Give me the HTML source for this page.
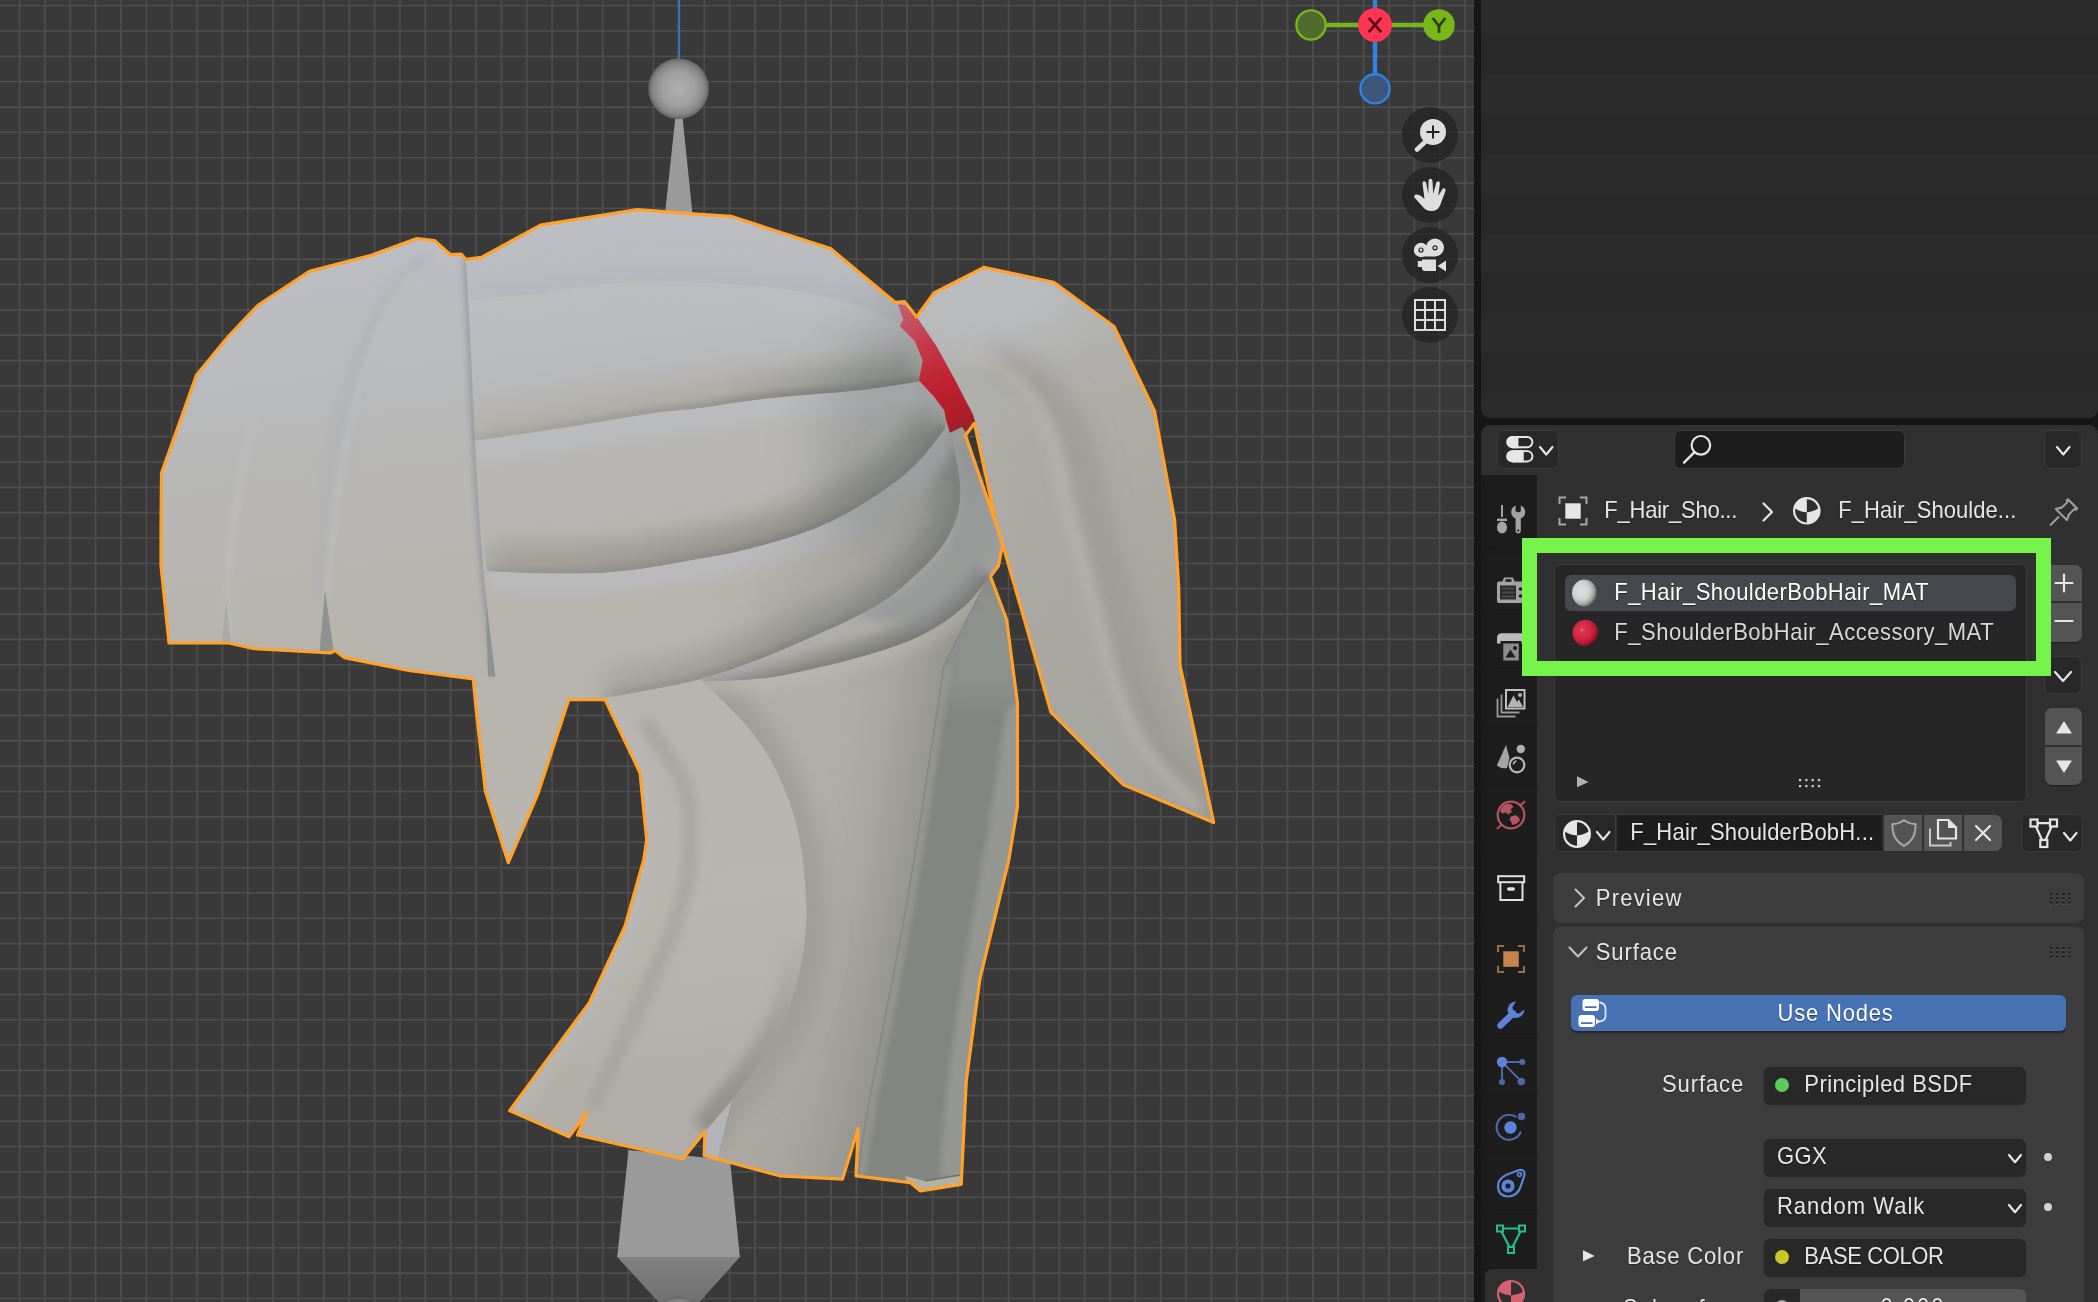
<!DOCTYPE html>
<html><head><meta charset="utf-8"><title>Blender</title>
<style>
html,body{margin:0;padding:0}
body{width:2098px;height:1302px;background:#161616;overflow:hidden;position:relative;font-family:"Liberation Sans",sans-serif;font-size:22px;color:#e6e6e6}
.abs{position:absolute}
.t{position:absolute;white-space:pre;line-height:26px;height:26px;opacity:.999;transform:scaleY(1.045);transform-origin:0 20.6px;text-shadow:0 1px 1px rgba(0,0,0,.45)}
#vp{position:absolute;left:0;top:0;width:1474px;height:1302px;background:#393939;overflow:hidden}
#vp svg{position:absolute;left:0;top:0}
#out{position:absolute;left:1481px;top:0;width:617px;height:418px;border-radius:0 0 9px 9px;overflow:hidden;background:#282828}
#props{position:absolute;left:1481px;top:425px;width:617px;height:877px;background:#303030;border-radius:9px 9px 0 0;overflow:hidden}
.btn{position:absolute;box-sizing:border-box}
</style></head><body>
<div id="vp"><svg width="1474" height="1302" viewBox="0 0 1474 1302"><path d="M19.54 0V1302M44.90 0V1302M70.26 0V1302M95.62 0V1302M120.98 0V1302M146.34 0V1302M171.70 0V1302M197.06 0V1302M222.42 0V1302M247.78 0V1302M273.14 0V1302M298.50 0V1302M323.86 0V1302M349.22 0V1302M374.58 0V1302M399.94 0V1302M425.30 0V1302M450.66 0V1302M476.02 0V1302M501.38 0V1302M526.74 0V1302M552.10 0V1302M577.46 0V1302M602.82 0V1302M628.18 0V1302M653.54 0V1302M678.90 0V1302M704.26 0V1302M729.62 0V1302M754.98 0V1302M780.34 0V1302M805.70 0V1302M831.06 0V1302M856.42 0V1302M881.78 0V1302M907.14 0V1302M932.50 0V1302M957.86 0V1302M983.22 0V1302M1008.58 0V1302M1033.94 0V1302M1059.30 0V1302M1084.66 0V1302M1110.02 0V1302M1135.38 0V1302M1160.74 0V1302M1186.10 0V1302M1211.46 0V1302M1236.82 0V1302M1262.18 0V1302M1287.54 0V1302M1312.90 0V1302M1338.26 0V1302M1363.62 0V1302M1388.98 0V1302M1414.34 0V1302M1439.70 0V1302M1465.06 0V1302M0 5.65H1474M0 31.00H1474M0 56.35H1474M0 81.70H1474M0 107.05H1474M0 132.40H1474M0 157.75H1474M0 183.10H1474M0 208.45H1474M0 233.80H1474M0 259.15H1474M0 284.50H1474M0 309.85H1474M0 335.20H1474M0 360.55H1474M0 385.90H1474M0 411.25H1474M0 436.60H1474M0 461.95H1474M0 487.30H1474M0 512.65H1474M0 538.00H1474M0 563.35H1474M0 588.70H1474M0 614.05H1474M0 639.40H1474M0 664.75H1474M0 690.10H1474M0 715.45H1474M0 740.80H1474M0 766.15H1474M0 791.50H1474M0 816.85H1474M0 842.20H1474M0 867.55H1474M0 892.90H1474M0 918.25H1474M0 943.60H1474M0 968.95H1474M0 994.30H1474M0 1019.65H1474M0 1045.00H1474M0 1070.35H1474M0 1095.70H1474M0 1121.05H1474M0 1146.40H1474M0 1171.75H1474M0 1197.10H1474M0 1222.45H1474M0 1247.80H1474M0 1273.15H1474M0 1298.50H1474" stroke="#4d4d4d" stroke-width="1.7" fill="none"/><defs>
<linearGradient id="gb" gradientUnits="userSpaceOnUse" x1="500" y1="210" x2="620" y2="1190">
<stop offset="0" stop-color="#bcbec3"/><stop offset=".1" stop-color="#babcc0"/><stop offset=".2" stop-color="#b8b8b8"/><stop offset=".3" stop-color="#b8b7b4"/><stop offset=".4" stop-color="#b7b4ad"/><stop offset=".72" stop-color="#b9b6af"/><stop offset="1" stop-color="#afaca5"/></linearGradient>
<linearGradient id="gp" gradientUnits="userSpaceOnUse" x1="930" y1="300" x2="1200" y2="800">
<stop offset="0" stop-color="#bbbcbf"/><stop offset=".3" stop-color="#adaca7"/><stop offset="1" stop-color="#a3a29d"/></linearGradient>
<linearGradient id="gr" gradientUnits="userSpaceOnUse" x1="905" y1="310" x2="962" y2="430">
<stop offset="0" stop-color="#c65a6e"/><stop offset=".3" stop-color="#c53a4b"/><stop offset=".6" stop-color="#bf2331"/><stop offset=".9" stop-color="#ae1d29"/><stop offset="1" stop-color="#962428"/></linearGradient>
<radialGradient id="gs" cx=".5" cy=".5" r=".5"><stop offset="0" stop-color="#afafaf"/><stop offset=".55" stop-color="#a0a0a0"/><stop offset=".85" stop-color="#868686"/><stop offset="1" stop-color="#646464"/></radialGradient>
<linearGradient id="gbone" x1="0" y1="0" x2="0" y2="1"><stop offset="0" stop-color="#828282"/><stop offset="1" stop-color="#707070"/></linearGradient>
<filter id="b3" filterUnits="userSpaceOnUse" x="0" y="0" width="1474" height="1302"><feGaussianBlur stdDeviation="3"/></filter>
<filter id="b6" filterUnits="userSpaceOnUse" x="0" y="0" width="1474" height="1302"><feGaussianBlur stdDeviation="6"/></filter>
<filter id="b12" filterUnits="userSpaceOnUse" x="0" y="0" width="1474" height="1302"><feGaussianBlur stdDeviation="12"/></filter>
<filter id="b25" filterUnits="userSpaceOnUse" x="0" y="0" width="1474" height="1302"><feGaussianBlur stdDeviation="25"/></filter>
<clipPath id="cb"><path d="M161.0 530.0 L161.5 473.0 L175.0 435.4 L196.5 375.0 L228.7 336.0 L258.3 305.0 L309.4 271.4 L371.2 255.3 L416.9 238.6 L434.4 240.5 L450.5 254.7 L461.2 254.0 L465.8 259.3 L481.4 257.4 L540.5 225.2 L637.3 209.6 L693.0 213.8 L731.0 216.3 L830.5 248.5 L895.0 302.3 L904.5 301.5 L916.6 317.0 L936.1 345.7 L954.5 379.1 L973.0 414.8 L975.3 422.3 L965.5 435.4 L997.0 526.8 L1002.6 544.2 L998.5 565.7 L990.5 576.5 L1006.6 619.5 L1017.4 702.8 L1017.4 807.6 L1008.8 860.0 L979.9 978.8 L966.3 1080.7 L961.2 1184.3 L920.5 1191.0 L910.3 1182.6 L856.0 1175.8 L858.3 1128.3 L842.4 1179.2 L779.6 1175.8 L704.2 1155.4 L704.9 1131.6 L682.8 1158.8 L577.5 1135.0 L586.7 1113.0 L569.0 1136.7 L509.6 1110.6 L589.4 1002.6 L625.0 926.2 L643.7 860.0 L646.7 840.0 L640.0 772.7 L605.0 699.6 L568.8 699.6 L537.8 794.2 L508.3 862.7 L485.4 791.5 L476.0 708.0 L473.3 679.0 L408.8 670.5 L344.3 657.6 L334.9 650.4 L330.9 653.0 L253.0 648.5 L228.7 643.0 L169.0 643.0 L161.0 565.7Z"/></clipPath><clipPath id="cp"><path d="M916.6 317.0 L934.0 293.0 L983.8 267.4 L1053.7 282.2 L1114.0 326.5 L1154.5 411.0 L1174.6 520.0 L1178.7 587.2 L1180.0 665.2 L1213.6 822.4 L1123.5 784.8 L1051.0 712.2 L1002.6 544.2 L997.0 526.8 L974.4 423.3 L973.0 414.8 L954.5 379.1 L936.1 345.7Z"/></clipPath></defs><path d="M678.9 0V60" stroke="#3b73b8" stroke-width="2.4"/><path d="M675.4 117 L682.5 117 L692.5 214 L665 214Z" fill="#9b9b9b"/><circle cx="678.6" cy="88.700" r="30.3" fill="url(#gs)"/><path d="M628.6 1150 L730 1160 L739.9 1256.9 L617.2 1256.9Z" fill="#9a9a9a"/><path d="M617.2 1256.9 L739.9 1256.9 L699.5 1302 L658.5 1302Z" fill="url(#gbone)"/><circle cx="678.6" cy="1327" r="30.4" fill="url(#gs)"/><path d="M161.0 530.0 L161.5 473.0 L175.0 435.4 L196.5 375.0 L228.7 336.0 L258.3 305.0 L309.4 271.4 L371.2 255.3 L416.9 238.6 L434.4 240.5 L450.5 254.7 L461.2 254.0 L465.8 259.3 L481.4 257.4 L540.5 225.2 L637.3 209.6 L693.0 213.8 L731.0 216.3 L830.5 248.5 L895.0 302.3 L904.5 301.5 L916.6 317.0 L936.1 345.7 L954.5 379.1 L973.0 414.8 L975.3 422.3 L965.5 435.4 L997.0 526.8 L1002.6 544.2 L998.5 565.7 L990.5 576.5 L1006.6 619.5 L1017.4 702.8 L1017.4 807.6 L1008.8 860.0 L979.9 978.8 L966.3 1080.7 L961.2 1184.3 L920.5 1191.0 L910.3 1182.6 L856.0 1175.8 L858.3 1128.3 L842.4 1179.2 L779.6 1175.8 L704.2 1155.4 L704.9 1131.6 L682.8 1158.8 L577.5 1135.0 L586.7 1113.0 L569.0 1136.7 L509.6 1110.6 L589.4 1002.6 L625.0 926.2 L643.7 860.0 L646.7 840.0 L640.0 772.7 L605.0 699.6 L568.8 699.6 L537.8 794.2 L508.3 862.7 L485.4 791.5 L476.0 708.0 L473.3 679.0 L408.8 670.5 L344.3 657.6 L334.9 650.4 L330.9 653.0 L253.0 648.5 L228.7 643.0 L169.0 643.0 L161.0 565.7Z" fill="url(#gb)"/><g clip-path="url(#cb)"><defs><clipPath id="s0"><path d="M462.0 190.0 L1000.0 190.0 L1000.0 330.0L901.9 326.0 L892.3 319.0 Q882.8 312.0 847.0 301.9 Q811.3 291.8 763.6 287.0 Q716.0 282.2 668.4 282.2 Q620.7 282.2 600.4 284.6 Q580.0 287.0 558.5 291.0 Q537.0 295.0 518.5 296.0 Q500.0 297.0 483.0 299.0 L466.0 301.0Z"/></clipPath><clipPath id="s1"><path d="M466.0 301.0 L483.0 299.0 Q500.0 297.0 518.5 296.0 Q537.0 295.0 558.5 291.0 Q580.0 287.0 600.4 284.6 Q620.7 282.2 668.4 282.2 Q716.0 282.2 763.6 287.0 Q811.3 291.8 847.0 301.9 Q882.8 312.0 892.3 319.0 L901.9 326.0 L1000.0 330.0 L1000.0 385.0L920.0 381.5 L890.0 386.2 Q860.0 391.0 812.5 394.4 Q764.9 397.9 732.5 403.2 Q700.0 408.6 678.3 410.5 Q656.6 412.3 602.5 421.4 Q548.3 430.4 510.0 435.8 L471.8 441.2Z"/></clipPath><clipPath id="s2"><path d="M471.8 441.2 L510.0 435.8 Q548.3 430.4 602.5 421.4 Q656.6 412.3 678.3 410.5 Q700.0 408.6 732.5 403.2 Q764.9 397.9 812.5 394.4 Q860.0 391.0 890.0 386.2 L920.0 381.5 L950.0 400.0L945.4 428.0 L931.0 447.0 Q916.7 466.0 895.9 481.8 Q875.0 497.5 846.2 513.8 Q817.5 530.0 778.2 541.0 Q739.0 552.0 715.9 556.0 Q692.7 560.0 671.4 564.0 Q650.0 568.0 631.0 570.3 Q612.0 572.6 598.2 573.0 Q584.4 573.5 562.2 573.5 Q540.0 573.5 513.5 572.4 L486.9 571.2Z"/></clipPath><clipPath id="s3"><path d="M486.9 571.2 L513.5 572.4 Q540.0 573.5 562.2 573.5 Q584.4 573.5 598.2 573.0 Q612.0 572.6 631.0 570.3 Q650.0 568.0 671.4 564.0 Q692.7 560.0 715.9 556.0 Q739.0 552.0 778.2 541.0 Q817.5 530.0 846.2 513.8 Q875.0 497.5 895.9 481.8 Q916.7 466.0 931.0 447.0 L945.4 428.0 L960.0 430.0L953.0 443.0 L958.4 471.5 Q963.8 500.0 954.6 523.5 Q945.5 547.0 923.2 568.0 Q901.0 589.0 890.5 596.5 Q880.0 604.0 865.0 612.0 Q850.0 620.0 836.4 626.0 Q822.8 632.0 791.4 646.0 Q760.0 660.0 730.0 670.0 Q700.0 680.0 677.5 684.5 Q655.0 689.0 630.0 693.5 L605.0 698.0 L560.0 705.0 L487.0 705.0Z"/></clipPath><clipPath id="s4"><path d="M700.0 680.0 L730.0 670.0 Q760.0 660.0 791.4 646.0 Q822.8 632.0 836.4 626.0 Q850.0 620.0 865.0 612.0 Q880.0 604.0 890.5 596.5 Q901.0 589.0 923.2 568.0 Q945.5 547.0 954.6 523.5 Q963.8 500.0 958.4 471.5 L953.0 443.0 L1000.0 440.0 L1010.0 560.0L990.0 575.8 L978.2 591.4 Q966.4 607.0 944.2 622.0 Q922.0 637.0 896.0 646.0 Q870.0 655.0 839.9 662.4 Q809.7 669.8 784.9 674.9 Q760.0 680.0 731.0 680.8 L702.0 681.5Z"/></clipPath><clipPath id="sa"><path d="M702.0 681.5 L560.0 690.0 L480.0 1140.0 L700.0 1200.0L695.0 1150.0 L700.2 1140.6 Q705.4 1131.2 715.2 1119.6 Q725.0 1108.0 736.4 1094.0 Q747.8 1080.0 759.9 1064.0 Q772.0 1048.0 783.9 1020.9 Q795.7 993.8 802.0 959.4 Q808.4 925.0 805.7 890.8 Q803.0 856.6 799.0 835.8 Q795.0 815.0 784.5 788.9 Q774.0 762.7 759.5 742.4 Q745.0 722.0 723.5 701.8 L702.0 681.5Z"/></clipPath><clipPath id="sb"><path d="M702.0 681.5 L723.5 701.8 Q745.0 722.0 759.5 742.4 Q774.0 762.7 784.5 788.9 Q795.0 815.0 799.0 835.8 Q803.0 856.6 805.7 890.8 Q808.4 925.0 802.0 959.4 Q795.7 993.8 783.9 1020.9 Q772.0 1048.0 759.9 1064.0 Q747.8 1080.0 736.4 1094.0 Q725.0 1108.0 715.2 1119.6 Q705.4 1131.2 700.2 1140.6 L695.0 1150.0 L700.0 1200.0 L858.4 1200.0L858.4 1175.0 L862.1 1147.8 Q865.8 1120.7 875.4 1070.3 Q885.0 1020.0 896.3 962.0 Q907.6 904.0 918.8 832.0 Q930.0 760.0 937.2 712.9 L944.5 665.8L990.0 575.8 L978.2 591.4 Q966.4 607.0 944.2 622.0 Q922.0 637.0 896.0 646.0 Q870.0 655.0 839.9 662.4 Q809.7 669.8 784.9 674.9 Q760.0 680.0 731.0 680.8 L702.0 681.5Z"/></clipPath><clipPath id="sc"><path d="M944.5 665.8 L937.2 712.9 Q930.0 760.0 918.8 832.0 Q907.6 904.0 896.3 962.0 Q885.0 1020.0 875.4 1070.3 Q865.8 1120.7 862.1 1147.8 L858.4 1175.0 L858.4 1200.0 L1030.0 1200.0 L1030.0 560.0 L988.7 576.5Z"/></clipPath><clipPath id="bg"><path d="M150.0 200.0L465.8 259.3 L467.9 294.6 Q470.0 330.0 471.5 365.0 Q473.0 400.0 475.5 450.0 Q478.0 500.0 481.0 540.0 Q484.0 580.0 489.4 628.5 L494.8 677.0 L500.0 700.0 L150.0 700.0Z"/></clipPath><linearGradient id="lgx" gradientUnits="userSpaceOnUse" x1="480" y1="0" x2="940" y2="0"><stop offset="0" stop-color="#b0ada6" stop-opacity=".75"/><stop offset=".5" stop-color="#adaaa4" stop-opacity=".85"/><stop offset=".8" stop-color="#94958f" stop-opacity=".92"/><stop offset="1" stop-color="#828480" stop-opacity=".97"/></linearGradient><linearGradient id="lgb" gradientUnits="userSpaceOnUse" x1="800" y1="850" x2="925" y2="871"><stop offset="0" stop-color="#8a8b86" stop-opacity=".12"/><stop offset=".45" stop-color="#8a8b86" stop-opacity=".32"/><stop offset="1" stop-color="#8a8b86" stop-opacity=".82"/></linearGradient><linearGradient id="lgbang" gradientUnits="userSpaceOnUse" x1="230" y1="300" x2="440" y2="670"><stop offset="0" stop-color="#bab8b1" stop-opacity="0"/><stop offset=".45" stop-color="#bab8b1" stop-opacity=".35"/><stop offset="1" stop-color="#b7b5ae" stop-opacity=".95"/></linearGradient><linearGradient id="lgx1" gradientUnits="userSpaceOnUse" x1="480" y1="0" x2="940" y2="0"><stop offset="0" stop-color="#b0ada6" stop-opacity="0.75"/><stop offset="0.5" stop-color="#adaaa4" stop-opacity="0.85"/><stop offset="0.8" stop-color="#969791" stop-opacity="0.92"/><stop offset="1" stop-color="#82847f" stop-opacity="0.97"/></linearGradient><linearGradient id="lgx2" gradientUnits="userSpaceOnUse" x1="480" y1="0" x2="940" y2="0"><stop offset="0" stop-color="#a39f99" stop-opacity="0.85"/><stop offset="0.3" stop-color="#9c9892" stop-opacity="0.9"/><stop offset="0.7" stop-color="#92918c" stop-opacity="0.93"/><stop offset="1" stop-color="#7e807c" stop-opacity="0.97"/></linearGradient><linearGradient id="lgx3" gradientUnits="userSpaceOnUse" x1="480" y1="0" x2="940" y2="0"><stop offset="0" stop-color="#aaa7a1" stop-opacity="0.85"/><stop offset="0.4" stop-color="#a3a09a" stop-opacity="0.9"/><stop offset="0.75" stop-color="#92928d" stop-opacity="0.93"/><stop offset="1" stop-color="#7e807c" stop-opacity="0.97"/></linearGradient><linearGradient id="lgsa" gradientUnits="userSpaceOnUse" x1="0" y1="930" x2="0" y2="1130"><stop offset="0" stop-color="#8a8781" stop-opacity="0"/><stop offset=".5" stop-color="#8a8781" stop-opacity=".45"/><stop offset="1" stop-color="#8a8781" stop-opacity=".8"/></linearGradient><linearGradient id="lgn" gradientUnits="userSpaceOnUse" x1="480" y1="0" x2="940" y2="0"><stop offset="0" stop-color="#7d7c77" stop-opacity="0.2"/><stop offset="0.45" stop-color="#7d7c77" stop-opacity="0.4"/><stop offset="0.8" stop-color="#7a7975" stop-opacity="0.8"/><stop offset="1" stop-color="#767672" stop-opacity="0.9"/></linearGradient></defs><g clip-path="url(#s0)"><path d="M466.0 301.0 L483.0 299.0 Q500.0 297.0 518.5 296.0 Q537.0 295.0 558.5 291.0 Q580.0 287.0 600.4 284.6 Q620.7 282.2 668.4 282.2 Q716.0 282.2 763.6 287.0 Q811.3 291.8 847.0 301.9 Q882.8 312.0 892.3 319.0 L901.9 326.0" fill="none" stroke="#aeb3ba" stroke-width="30" filter="url(#b12)" stroke-opacity=".55"/></g><g clip-path="url(#s1)"><path d="M471.8 441.2 L510.0 435.8 Q548.3 430.4 602.5 421.4 Q656.6 412.3 678.3 410.5 Q700.0 408.6 732.5 403.2 Q764.9 397.9 812.5 394.4 Q860.0 391.0 890.0 386.2 L920.0 381.5" fill="none" stroke="url(#lgx1)" stroke-width="54" filter="url(#b12)" /></g><g clip-path="url(#s1)"><path d="M471.8 441.2 L510.0 435.8 Q548.3 430.4 602.5 421.4 Q656.6 412.3 678.3 410.5 Q700.0 408.6 732.5 403.2 Q764.9 397.9 812.5 394.4 Q860.0 391.0 890.0 386.2 L920.0 381.5" fill="none" stroke="url(#lgn)" stroke-width="12" filter="url(#b3)" /></g><g clip-path="url(#s2)"><path d="M486.9 571.2 L513.5 572.4 Q540.0 573.5 562.2 573.5 Q584.4 573.5 598.2 573.0 Q612.0 572.6 631.0 570.3 Q650.0 568.0 671.4 564.0 Q692.7 560.0 715.9 556.0 Q739.0 552.0 778.2 541.0 Q817.5 530.0 846.2 513.8 Q875.0 497.5 895.9 481.8 Q916.7 466.0 931.0 447.0 L945.4 428.0" fill="none" stroke="url(#lgx2)" stroke-width="58" filter="url(#b12)" /></g><g clip-path="url(#s2)"><path d="M486.9 571.2 L513.5 572.4 Q540.0 573.5 562.2 573.5 Q584.4 573.5 598.2 573.0 Q612.0 572.6 631.0 570.3 Q650.0 568.0 671.4 564.0 Q692.7 560.0 715.9 556.0 Q739.0 552.0 778.2 541.0 Q817.5 530.0 846.2 513.8 Q875.0 497.5 895.9 481.8 Q916.7 466.0 931.0 447.0 L945.4 428.0" fill="none" stroke="url(#lgn)" stroke-width="12" filter="url(#b3)" /></g><g clip-path="url(#s3)"><path d="M605.0 698.0 L630.0 693.5 Q655.0 689.0 677.5 684.5 Q700.0 680.0 730.0 670.0 Q760.0 660.0 791.4 646.0 Q822.8 632.0 836.4 626.0 Q850.0 620.0 865.0 612.0 Q880.0 604.0 890.5 596.5 Q901.0 589.0 923.2 568.0 Q945.5 547.0 954.6 523.5 Q963.8 500.0 958.4 471.5 L953.0 443.0" fill="none" stroke="url(#lgx3)" stroke-width="54" filter="url(#b12)" /></g><g clip-path="url(#s3)"><path d="M605.0 698.0 L630.0 693.5 Q655.0 689.0 677.5 684.5 Q700.0 680.0 730.0 670.0 Q760.0 660.0 791.4 646.0 Q822.8 632.0 836.4 626.0 Q850.0 620.0 865.0 612.0 Q880.0 604.0 890.5 596.5 Q901.0 589.0 923.2 568.0 Q945.5 547.0 954.6 523.5 Q963.8 500.0 958.4 471.5 L953.0 443.0" fill="none" stroke="url(#lgn)" stroke-width="12" filter="url(#b3)" /></g><g clip-path="url(#s4)"><path d="M702.0 681.5 L731.0 680.8 Q760.0 680.0 784.9 674.9 Q809.7 669.8 839.9 662.4 Q870.0 655.0 896.0 646.0 Q922.0 637.0 944.2 622.0 Q966.4 607.0 978.2 591.4 L990.0 575.8" fill="none" stroke="url(#lgx3)" stroke-width="36" filter="url(#b6)" /></g><g clip-path="url(#s4)"><path d="M702.0 681.5 L731.0 680.8 Q760.0 680.0 784.9 674.9 Q809.7 669.8 839.9 662.4 Q870.0 655.0 896.0 646.0 Q922.0 637.0 944.2 622.0 Q966.4 607.0 978.2 591.4 L990.0 575.8" fill="none" stroke="url(#lgn)" stroke-width="10" filter="url(#b3)" /></g><g clip-path="url(#s1)"><path d="M466.0 301.0 L483.0 299.0 Q500.0 297.0 518.5 296.0 Q537.0 295.0 558.5 291.0 Q580.0 287.0 600.4 284.6 Q620.7 282.2 668.4 282.2 Q716.0 282.2 763.6 287.0 Q811.3 291.8 847.0 301.9 Q882.8 312.0 892.3 319.0 L901.9 326.0" fill="none" stroke="#bcbdc1" stroke-opacity="0.7" stroke-width="40" filter="url(#b6)"/></g><g clip-path="url(#s2)"><path d="M471.8 441.2 L510.0 435.8 Q548.3 430.4 602.5 421.4 Q656.6 412.3 678.3 410.5 Q700.0 408.6 732.5 403.2 Q764.9 397.9 812.5 394.4 Q860.0 391.0 890.0 386.2 L920.0 381.5" fill="none" stroke="#bbbcbf" stroke-opacity="0.75" stroke-width="44" filter="url(#b6)"/></g><g clip-path="url(#s3)"><path d="M486.9 571.2 L513.5 572.4 Q540.0 573.5 562.2 573.5 Q584.4 573.5 598.2 573.0 Q612.0 572.6 631.0 570.3 Q650.0 568.0 671.4 564.0 Q692.7 560.0 715.9 556.0 Q739.0 552.0 778.2 541.0 Q817.5 530.0 846.2 513.8 Q875.0 497.5 895.9 481.8 Q916.7 466.0 931.0 447.0 L945.4 428.0" fill="none" stroke="#bbbcbf" stroke-opacity="0.75" stroke-width="44" filter="url(#b6)"/></g><g clip-path="url(#s4)"><path d="M700.0 680.0 L730.0 670.0 Q760.0 660.0 791.4 646.0 Q822.8 632.0 836.4 626.0 Q850.0 620.0 865.0 612.0 Q880.0 604.0 890.5 596.5 Q901.0 589.0 923.2 568.0 Q945.5 547.0 954.6 523.5 Q963.8 500.0 958.4 471.5 L953.0 443.0" fill="none" stroke="#bbbcbf" stroke-opacity="0.35" stroke-width="22" filter="url(#b6)"/></g><ellipse cx="925" cy="410" rx="95" ry="150" fill="#777b7c" opacity=".35" filter="url(#b25)" transform="rotate(28 925 410)"/><path d="M952.6 443 L963.5 497.1 L945.5 547 L901 589 L850 615 L927 631 L988.7 576.5 L1010 560 L1005 500 L965.5 430Z" fill="#8d9193" opacity=".62" filter="url(#b6)"/><ellipse cx="880" cy="550" rx="60" ry="150" fill="#8d8f8e" opacity=".3" filter="url(#b25)" transform="rotate(50 880 550)"/><g clip-path="url(#sa)"><path d="M605.0 699.6 L622.5 736.2 Q640.0 772.7 643.4 806.4 Q646.7 840.0 635.9 883.1 Q625.0 926.2 607.2 964.4 Q589.4 1002.6 549.5 1056.6 L509.6 1110.6" fill="none" stroke="#b6b8bb" stroke-opacity=".7" stroke-width="20" filter="url(#b6)"/><path d="M650.0 720.0 L670.0 750.0 Q690.0 780.0 694.0 796.5 Q698.0 813.0 696.3 852.9 Q694.6 892.7 674.8 939.7 Q655.0 986.6 626.0 1048.3 L597.0 1110.0" fill="none" stroke="#9c9993" stroke-opacity=".6" stroke-width="14" filter="url(#b6)" transform="translate(-6,0)"/></g><g clip-path="url(#sa)"><path d="M808.4 925.0 L802.0 959.4 Q795.7 993.8 783.9 1020.9 Q772.0 1048.0 759.9 1064.0 Q747.8 1080.0 736.4 1094.0 Q725.0 1108.0 715.2 1119.6 L705.4 1131.2" fill="none" stroke="url(#lgsa)" stroke-width="34" filter="url(#b6)"/></g><g clip-path="url(#sb)"><path d="M702.0 681.5 L723.5 701.8 Q745.0 722.0 759.5 742.4 Q774.0 762.7 784.5 788.9 Q795.0 815.0 799.0 835.8 Q803.0 856.6 805.7 890.8 Q808.4 925.0 802.0 959.4 Q795.7 993.8 783.9 1020.9 Q772.0 1048.0 759.9 1064.0 Q747.8 1080.0 736.4 1094.0 Q725.0 1108.0 715.2 1119.6 Q705.4 1131.2 700.2 1140.6 L695.0 1150.0 L700.0 1200.0 L858.4 1200.0L858.4 1175.0 L862.1 1147.8 Q865.8 1120.7 875.4 1070.3 Q885.0 1020.0 896.3 962.0 Q907.6 904.0 918.8 832.0 Q930.0 760.0 937.2 712.9 L944.5 665.8L990.0 575.8 L978.2 591.4 Q966.4 607.0 944.2 622.0 Q922.0 637.0 896.0 646.0 Q870.0 655.0 839.9 662.4 Q809.7 669.8 784.9 674.9 Q760.0 680.0 731.0 680.8 L702.0 681.5Z" fill="url(#lgb)"/><path d="M702.0 681.5 L723.5 701.8 Q745.0 722.0 759.5 742.4 Q774.0 762.7 784.5 788.9 Q795.0 815.0 799.0 835.8 Q803.0 856.6 805.7 890.8 Q808.4 925.0 802.0 959.4 Q795.7 993.8 783.9 1020.9 Q772.0 1048.0 759.9 1064.0 Q747.8 1080.0 736.4 1094.0 Q725.0 1108.0 715.2 1119.6 Q705.4 1131.2 700.2 1140.6 L695.0 1150.0" fill="none" stroke="#94938d" stroke-opacity=".62" stroke-width="40" filter="url(#b12)"/><path d="M702.0 681.5 L731.0 680.8 Q760.0 680.0 784.9 674.9 Q809.7 669.8 839.9 662.4 Q870.0 655.0 896.0 646.0 Q922.0 637.0 944.2 622.0 Q966.4 607.0 978.2 591.4 L990.0 575.8" fill="none" stroke="#bfbdb7" stroke-opacity=".45" stroke-width="24" filter="url(#b6)"/></g><path d="M944.5 665.8 L937.2 712.9 Q930.0 760.0 918.8 832.0 Q907.6 904.0 896.3 962.0 Q885.0 1020.0 875.4 1070.3 Q865.8 1120.7 862.1 1147.8 L858.4 1175.0 L858.4 1200.0 L1030.0 1200.0 L1030.0 560.0 L988.7 576.5Z" fill="#838580" transform="translate(-1.2,0)"/><g clip-path="url(#sc)"><path d="M944.5 665.8 L937.2 712.9 Q930.0 760.0 918.8 832.0 Q907.6 904.0 896.3 962.0 Q885.0 1020.0 875.4 1070.3 Q865.8 1120.7 862.1 1147.8 L858.4 1175.0 L858.4 1200.0 L1030.0 1200.0 L1030.0 560.0 L988.7 576.5Z" fill="#838580"/><path d="M944.5 665.8 L937.2 712.9 Q930.0 760.0 918.8 832.0 Q907.6 904.0 896.3 962.0 Q885.0 1020.0 875.4 1070.3 Q865.8 1120.7 862.1 1147.8 L858.4 1175.0" fill="none" stroke="#a9a8a2" stroke-opacity=".8" stroke-width="5" filter="url(#b3)" transform="translate(3,0)"/><path d="M1006.0 707.5 L998.5 761.6 Q991.0 815.8 978.0 887.9 Q965.0 960.0 956.0 1020.5 Q947.0 1081.0 943.2 1128.0 L939.5 1175.0 L1030 1200 L1030 700Z" fill="#a2a5a1" opacity=".55" filter="url(#b3)"/><path d="M944 600 L1030 560 L1030 700 L940 700Z" fill="#949996" opacity=".6" filter="url(#b12)"/></g><g clip-path="url(#bg)"><path d="M465.8 259.3 L467.9 294.6 Q470.0 330.0 471.5 365.0 Q473.0 400.0 475.5 450.0 Q478.0 500.0 481.0 540.0 Q484.0 580.0 489.4 628.5 L494.8 677.0" fill="none" stroke="#828a8e" stroke-opacity=".8" stroke-width="5" filter="url(#b3)"/><path d="M443.0 254.7 L420.0 270.6 Q397.0 286.5 379.5 328.8 Q362.0 371.0 349.5 424.0 Q337.0 477.0 331.9 539.0 L326.7 601.0" fill="none" stroke="#abaeb2" stroke-opacity=".5" stroke-width="14" filter="url(#b6)" transform="translate(-8,0)"/><path d="M443.0 254.7 L420.0 270.6 Q397.0 286.5 379.5 328.8 Q362.0 371.0 349.5 424.0 Q337.0 477.0 331.9 539.0 L326.7 601.0" fill="none" stroke="#c4c5c7" stroke-opacity=".7" stroke-width="3.500" filter="url(#b3)"/><path d="M256.0 406.7 L246.0 453.4 Q236.0 500.0 231.0 541.5 Q226.0 583.0 228.5 611.5 L231.0 640.0" fill="none" stroke="#c2c2c2" stroke-opacity=".6" stroke-width="3.500" filter="url(#b3)"/><path d="M325 590 L333.700 651 L319.500 652Z" fill="#8e928f"/><path d="M226 600 L231 645 L222 645Z" fill="#a9a9a5"/></g><path d="M486 600 L495.500 677 L488 676Z" fill="#8c9294"/><path d="M732 1101 L705.4 1131.2 L703.6 1159 L717.4 1159 L725.7 1124.2Z" fill="#b3b4b7"/><path d="M905 1176 L925 1181 L960 1175 L962 1186 L920 1192 L908 1183Z" fill="#b3b0a4"/><path d="M925 1181 L960 1175" stroke="#6f716d" stroke-width="1.500"/></g><path d="M916.6 317.0 L934.0 293.0 L983.8 267.4 L1053.7 282.2 L1114.0 326.5 L1154.5 411.0 L1174.6 520.0 L1178.7 587.2 L1180.0 665.2 L1213.6 822.4 L1123.5 784.8 L1051.0 712.2 L1002.6 544.2 L997.0 526.8 L974.4 423.3 L973.0 414.8 L954.5 379.1 L936.1 345.7Z" fill="url(#gp)"/><g clip-path="url(#cp)"><path d="M962.0 349.0 L982.3 357.2 Q1002.6 365.5 1020.0 384.2 Q1037.5 403.0 1046.8 426.0 Q1056.0 449.0 1061.0 475.5 Q1066.0 502.0 1072.0 523.5 Q1078.0 545.0 1083.0 565.0 Q1088.0 585.0 1092.8 602.5 Q1097.7 620.0 1103.2 644.5 Q1108.8 669.0 1117.4 693.6 Q1126.0 718.3 1138.3 739.8 Q1150.6 761.3 1174.8 784.5 L1199.0 807.6" fill="none" stroke="#94938e" stroke-opacity=".6" stroke-width="32" filter="url(#b12)" transform="translate(26,8)"/><path d="M962.0 349.0 L982.3 357.2 Q1002.6 365.5 1020.0 384.2 Q1037.5 403.0 1046.8 426.0 Q1056.0 449.0 1061.0 475.5 Q1066.0 502.0 1072.0 523.5 Q1078.0 545.0 1083.0 565.0 Q1088.0 585.0 1092.8 602.5 Q1097.7 620.0 1103.2 644.5 Q1108.8 669.0 1117.4 693.6 Q1126.0 718.3 1138.3 739.8 Q1150.6 761.3 1174.8 784.5 L1199.0 807.6" fill="none" stroke="#a8a7a2" stroke-opacity=".4" stroke-width="40" filter="url(#b12)" transform="translate(-26,22)"/><path d="M962.0 349.0 L982.3 357.2 Q1002.6 365.5 1020.0 384.2 Q1037.5 403.0 1046.8 426.0 Q1056.0 449.0 1061.0 475.5 Q1066.0 502.0 1072.0 523.5 Q1078.0 545.0 1083.0 565.0 Q1088.0 585.0 1092.8 602.5 Q1097.7 620.0 1103.2 644.5 Q1108.8 669.0 1117.4 693.6 Q1126.0 718.3 1138.3 739.8 Q1150.6 761.3 1174.8 784.5 L1199.0 807.6" fill="none" stroke="#bbb8af" stroke-opacity=".85" stroke-width="8" filter="url(#b6)"/><ellipse cx="1010" cy="300" rx="75" ry="40" fill="#bcbdc0" opacity=".7" filter="url(#b25)" transform="rotate(-12 1010 300)"/></g><path d="M898.0 304.2 L903.2 319.8 L899.8 326.1 L914.8 341.1 L922.8 360.7 L918.8 380.3 L933.8 396.4 L944.1 410.2 L946.5 421.7 L949.9 432.7 L962.0 426.9 L965.5 432.1 L975.3 422.3 L973.0 414.8 L954.5 379.1 L936.1 345.7 L917.6 318.6 L908.4 305.4Z" fill="url(#gr)"/><path d="M161.0 530.0 L161.5 473.0 L175.0 435.4 L196.5 375.0 L228.7 336.0 L258.3 305.0 L309.4 271.4 L371.2 255.3 L416.9 238.6 L434.4 240.5 L450.5 254.7 L461.2 254.0 L465.8 259.3 L481.4 257.4 L540.5 225.2 L637.3 209.6 L693.0 213.8 L731.0 216.3 L830.5 248.5 L895.0 302.3 L904.5 301.5 L916.6 317.0 L934.0 293.0 L983.8 267.4 L1053.7 282.2 L1114.0 326.5 L1154.5 411.0 L1174.6 520.0 L1178.7 587.2 L1180.0 665.2 L1213.6 822.4 L1123.5 784.8 L1051.0 712.2 L1002.6 544.2 L998.5 565.7 L990.5 576.5 L1006.6 619.5 L1017.4 702.8 L1017.4 807.6 L1008.8 860.0 L979.9 978.8 L966.3 1080.7 L961.2 1184.3 L920.5 1191.0 L910.3 1182.6 L856.0 1175.8 L858.3 1128.3 L842.4 1179.2 L779.6 1175.8 L704.2 1155.4 L704.9 1131.6 L682.8 1158.8 L577.5 1135.0 L586.7 1113.0 L569.0 1136.7 L509.6 1110.6 L589.4 1002.6 L625.0 926.2 L643.7 860.0 L646.7 840.0 L640.0 772.7 L605.0 699.6 L568.8 699.6 L537.8 794.2 L508.3 862.7 L485.4 791.5 L476.0 708.0 L473.3 679.0 L408.8 670.5 L344.3 657.6 L334.9 650.4 L330.9 653.0 L253.0 648.5 L228.7 643.0 L169.0 643.0 L161.0 565.7Z M974.4 423.3 L965.5 435.4 L997.0 526.8Z M997 526.8L1002.6 544.2" fill="none" stroke="#ffa12a" stroke-width="3.2" stroke-linejoin="round"/></svg><svg width="1474" height="1302" viewBox="0 0 1474 1302" style="position:absolute;left:0;top:0"><path d="M1375 0V89" stroke="#2f83e1" stroke-width="4.400"/><path d="M1311 25H1439" stroke="#77b71a" stroke-width="4.400"/><circle cx="1311" cy="25" r="14.600" fill="#506b2d" stroke="#77b71a" stroke-width="2.400"/><circle cx="1375" cy="88.800" r="14.600" fill="#3c5779" stroke="#2f83e1" stroke-width="2.400"/><circle cx="1439" cy="25" r="15.800" fill="#77b71a"/><circle cx="1375" cy="25" r="17" fill="#ff3553"/><path d="M1368.800 17.800L1381.200 32.200M1381.200 17.800L1368.800 32.200" stroke="#5c0d1c" stroke-width="2.700"/><path d="M1432.800 18L1439 26.200L1445.200 18M1439 26.200V32.800" stroke="#2a4106" stroke-width="2.700" fill="none"/><circle cx="1430" cy="135" r="28" fill="#212121" fill-opacity=".72"/><circle cx="1430" cy="195" r="28" fill="#212121" fill-opacity=".72"/><circle cx="1430" cy="255" r="28" fill="#212121" fill-opacity=".72"/><circle cx="1430" cy="315" r="28" fill="#212121" fill-opacity=".72"/><path d="M1424.500 142.500L1417 149.500" stroke="#dedede" stroke-width="4.600" stroke-linecap="round"/><circle cx="1433" cy="132" r="13" fill="#dedede"/><path d="M1433 125.500V138.500M1426.500 132H1439.500" stroke="#222" stroke-width="2"/><g fill="#dedede"><path d="M1414.500 197.500Q1413.500 195 1416 194.500Q1418.500 194.300 1421 196L1424.500 199L1422.500 183.500Q1422.300 181.300 1424.200 181.200Q1425.900 181.200 1426.300 183.200L1428.300 194L1428.500 181Q1428.600 178.800 1430.500 178.800Q1432.400 178.800 1432.500 181L1433.200 194L1436.200 182.800Q1436.800 180.800 1438.500 181.200Q1440.200 181.700 1439.900 183.800L1438.200 196L1442.200 189.500Q1443.300 187.800 1444.800 188.600Q1446.200 189.500 1445.400 191.300L1440 205.500Q1437.500 211 1431.500 211Q1426 211 1422.500 206.500Z"/></g><g fill="#dedede"><circle cx="1421" cy="250" r="7.200"/><circle cx="1435" cy="247.500" r="9"/><rect x="1421" y="246" width="14" height="10.500"/><path d="M1422 259.500H1436V271H1425Q1422 271 1422 268Z"/><rect x="1417.800" y="261" width="4.500" height="6"/><path d="M1437.500 266L1446 260.500V271.500Z"/></g><circle cx="1421" cy="250" r="2" fill="none" stroke="#222" stroke-width="1.200"/><circle cx="1435" cy="247.800" r="2" fill="none" stroke="#222" stroke-width="1.200"/><path d="M1415 300H1445V330H1415ZM1425 300V330M1435 300V330M1415 310H1445M1415 320H1445" fill="none" stroke="#dedede" stroke-width="2"/></svg></div><div id="out"><div class="abs" style="left:0;top:-6.2px;width:617px;height:40px;background:#2b2b2b"></div><div class="abs" style="left:0;top:33.8px;width:617px;height:40px;background:#282828"></div><div class="abs" style="left:0;top:73.7px;width:617px;height:40px;background:#2b2b2b"></div><div class="abs" style="left:0;top:113.7px;width:617px;height:40px;background:#282828"></div><div class="abs" style="left:0;top:153.6px;width:617px;height:40px;background:#2b2b2b"></div><div class="abs" style="left:0;top:193.6px;width:617px;height:40px;background:#282828"></div><div class="abs" style="left:0;top:233.5px;width:617px;height:40px;background:#2b2b2b"></div><div class="abs" style="left:0;top:273.4px;width:617px;height:40px;background:#282828"></div><div class="abs" style="left:0;top:313.4px;width:617px;height:40px;background:#2b2b2b"></div><div class="abs" style="left:0;top:353.3px;width:617px;height:40px;background:#282828"></div><div class="abs" style="left:0;top:393.3px;width:617px;height:40px;background:#2b2b2b"></div></div><div id="props"><div class="abs" style="left:-1481px;top:-425px;width:2098px;height:1302px"><div class="btn" style="left:1481.0px;top:475.0px;width:56.0px;height:827.0px;background:#1b1b1b;border-radius:0;"></div><div class="btn" style="left:1484.5px;top:478.0px;width:52.5px;height:69.0px;background:#1d1d1d;border-radius:7px 0 0 7px;"></div><div class="btn" style="left:1484.5px;top:553.0px;width:52.5px;height:56.2px;background:#1d1d1d;border-radius:7px 0 0 7px;"></div><div class="btn" style="left:1484.5px;top:611.2px;width:52.5px;height:56.2px;background:#1d1d1d;border-radius:7px 0 0 7px;"></div><div class="btn" style="left:1484.5px;top:669.4px;width:52.5px;height:56.2px;background:#1d1d1d;border-radius:7px 0 0 7px;"></div><div class="btn" style="left:1484.5px;top:727.6px;width:52.5px;height:56.2px;background:#1d1d1d;border-radius:7px 0 0 7px;"></div><div class="btn" style="left:1484.5px;top:785.8px;width:52.5px;height:58.0px;background:#1d1d1d;border-radius:7px 0 0 7px;"></div><div class="btn" style="left:1484.5px;top:852.0px;width:52.5px;height:63.5px;background:#1d1d1d;border-radius:7px 0 0 7px;"></div><div class="btn" style="left:1484.5px;top:924.0px;width:52.5px;height:55.5px;background:#1d1d1d;border-radius:7px 0 0 7px;"></div><div class="btn" style="left:1484.5px;top:981.4px;width:52.5px;height:55.5px;background:#1d1d1d;border-radius:7px 0 0 7px;"></div><div class="btn" style="left:1484.5px;top:1038.8px;width:52.5px;height:55.5px;background:#1d1d1d;border-radius:7px 0 0 7px;"></div><div class="btn" style="left:1484.5px;top:1096.2px;width:52.5px;height:55.5px;background:#1d1d1d;border-radius:7px 0 0 7px;"></div><div class="btn" style="left:1484.5px;top:1153.6px;width:52.5px;height:55.5px;background:#1d1d1d;border-radius:7px 0 0 7px;"></div><div class="btn" style="left:1484.5px;top:1211.0px;width:52.5px;height:55.5px;background:#1d1d1d;border-radius:7px 0 0 7px;"></div><div class="btn" style="left:1484.5px;top:1269.0px;width:53.5px;height:41.0px;background:#303030;border-radius:7px 0 0 7px;"></div><svg class="abs" style="left:1494.0px;top:502.0px" width="34" height="34" viewBox="0 0 34 34"><path d="M8 3V15" stroke="#a4a4a4" stroke-width="2"/><rect x="3" y="16.6" width="10" height="2.4" fill="#a4a4a4"/><ellipse cx="8" cy="25.5" rx="5" ry="6" fill="#a4a4a4"/>
<circle cx="24.200" cy="10" r="7" fill="#a4a4a4"/><path d="M21.600 1.500H26.800V9.300Q24.200 11 21.600 9.300Z" fill="#1d1d1d"/><path d="M21.600 14H26.800V28.800A2.600 2.600 0 0 1 21.600 28.800Z" fill="#a4a4a4"/><circle cx="24.200" cy="28.600" r="1.100" fill="#1d1d1d"/></svg><svg class="abs" style="left:1494.0px;top:573.0px" width="34" height="34" viewBox="0 0 34 34"><path d="M3 10.5Q3 8.5 5 8.500H8.500L10 4.5H19L20.500 8.500H29Q31 8.500 31 10.500V28Q31 30 29 30H5Q3 30 3 28Z" fill="#a4a4a4"/><rect x="11.500" y="6.200" width="6" height="2.600" fill="#1d1d1d"/><rect x="6" y="12.500" width="16" height="14" fill="#2a2a2a"/><path d="M7.500 15.500H20.500M7.500 19.500H20.500M7.500 23.500H20.500" stroke="#4a4a4a" stroke-width="2"/><circle cx="26.500" cy="16" r="1.800" fill="#1d1d1d"/><circle cx="26.500" cy="23" r="1.800" fill="#1d1d1d"/></svg><svg class="abs" style="left:1494.0px;top:630.0px" width="34" height="34" viewBox="0 0 34 34"><path d="M3 8Q3 3.200 8 3.200H26Q31 3.200 31 8V13.500H27.500V11H6.500V13.500H3Z" fill="#bcbcbc"/><rect x="9.300" y="13.500" width="15.500" height="17" fill="#8c8c8c"/><path d="M11.500 27.500L16.500 19.500L21.500 27.500Z" fill="#1d1d1d"/><circle cx="21" cy="18" r="2" fill="#1d1d1d"/></svg><svg class="abs" style="left:1494.0px;top:686.0px" width="34" height="34" viewBox="0 0 34 34"><rect x="12" y="4" width="18.500" height="18.500" fill="none" stroke="#c0c0c0" stroke-width="2"/><path d="M13.500 21L19.500 9.500L23 16L25 13.500L29 21Z" fill="#b4b4b4"/><circle cx="26" cy="9" r="2" fill="#b4b4b4"/><path d="M7.500 8.500V26.500H25.500M3.500 12.500V30.500H21.500" fill="none" stroke="#9a9a9a" stroke-width="1.800"/></svg><svg class="abs" style="left:1494.0px;top:741.0px" width="34" height="34" viewBox="0 0 34 34"><path d="M12 4L2.800 24.500Q7 28 13 27L15.500 17Z" fill="#a4a4a4"/><circle cx="26.800" cy="8" r="4.200" fill="#b0b0b0"/><circle cx="23" cy="24" r="7.300" fill="#1d1d1d" stroke="#b8b8b8" stroke-width="2.200"/><path d="M19.500 23.500Q19.800 20.500 22.500 20" fill="none" stroke="#b8b8b8" stroke-width="1.600"/></svg><svg class="abs" style="left:1494.0px;top:798.0px" width="34" height="34" viewBox="0 0 34 34"><circle cx="17" cy="17" r="13.300" fill="none" stroke="#b5545f" stroke-width="2.200"/><path d="M9.500 7.500Q13 5 17 6L19.500 9L16.500 11.500L18 14L14 16.500L11.500 14.500L8.500 15.500L6 13Q7 9.500 9.500 7.500Z" fill="#b5545f"/><path d="M17 18.500L21.500 17L25 19.500L26 22.500L22 26L18.500 27L17 23.500L15.500 21Z" fill="#b5545f"/><path d="M3 31L7.800 26.200M26.200 7.800L31 3" stroke="#b5545f" stroke-width="2"/></svg><svg class="abs" style="left:1494.0px;top:871.0px" width="34" height="34" viewBox="0 0 34 34"><rect x="4.200" y="5.200" width="26" height="6" fill="none" stroke="#e2e2e2" stroke-width="2"/><path d="M6.400 11.200V29H28.500V11.200" fill="none" stroke="#e2e2e2" stroke-width="2"/><rect x="13" y="16.200" width="8" height="3.600" rx="1.800" fill="#e2e2e2"/></svg><svg class="abs" style="left:1494.0px;top:942.0px" width="34" height="34" viewBox="0 0 34 34"><path d="M4 10V4H10M24 4H30V10M30 24V30H24M10 30H4V24" fill="none" stroke="#9a6b45" stroke-width="2"/><rect x="9.300" y="9.300" width="15.500" height="15.500" fill="#c5834e"/></svg><svg class="abs" style="left:1494.0px;top:998.0px" width="34" height="34" viewBox="0 0 34 34"><path d="M6.500 27.500L19 15.500" stroke="#5b84d6" stroke-width="6.500" stroke-linecap="round"/><path d="M22 3.500Q14 4 13.500 12Q14 19.500 21.500 20Q29.500 19.500 30.500 11.500L25 15.500L19.500 14.500L18.500 9Z" fill="#5b84d6"/></svg><svg class="abs" style="left:1494.0px;top:1055.0px" width="34" height="34" viewBox="0 0 34 34"><path d="M8 7H28.500M8 7V27M8 7L27 26" stroke="#4b68a8" stroke-width="2"/><circle cx="8" cy="7" r="5.200" fill="#5b84d6"/><circle cx="28.300" cy="7" r="3" fill="#4b68a8"/><circle cx="8" cy="27" r="3" fill="#4b68a8"/><circle cx="27.300" cy="26.500" r="3.800" fill="#4b68a8"/></svg><svg class="abs" style="left:1494.0px;top:1110.0px" width="34" height="34" viewBox="0 0 34 34"><path d="M26.500 22.500A12.500 12.500 0 1 1 21.500 6.500" fill="none" stroke="#4b68a8" stroke-width="2.200" stroke-linecap="round"/><circle cx="16.500" cy="17.500" r="6.200" fill="#5b84d6"/><circle cx="27.500" cy="6.500" r="3.800" fill="#4b68a8"/></svg><svg class="abs" style="left:1494.0px;top:1166.0px" width="34" height="34" viewBox="0 0 34 34"><path d="M4 21.500Q3.500 13 12 9L25 4Q31 3 30.500 9L26.500 21Q23 30.500 14 30.500Q5 30 4 21.500Z" fill="none" stroke="#5b84d6" stroke-width="2.200"/><circle cx="14" cy="20" r="4.600" fill="none" stroke="#5b84d6" stroke-width="4"/><circle cx="25.500" cy="8.500" r="1.900" fill="none" stroke="#5b84d6" stroke-width="1.600"/></svg><svg class="abs" style="left:1494.0px;top:1222.0px" width="34" height="34" viewBox="0 0 34 34"><path d="M6 6.500H28M6 6.500L17 28M28 6.500L17 28" stroke="#1fbf8c" stroke-width="2.200" fill="none"/><g fill="#1d1d1d" stroke="#1fbf8c" stroke-width="2"><rect x="3" y="3.500" width="6" height="6"/><rect x="25" y="3.500" width="6" height="6"/><rect x="14" y="25" width="6" height="6"/></g></svg><svg class="abs" style="left:1494.0px;top:1277.0px" width="34" height="34" viewBox="0 0 34 34"><circle cx="17" cy="17" r="13" fill="none" stroke="#d8616f" stroke-width="2.200"/><path d="M17 17.500V4A13 13 0 0 0 4.200 14.500Q10 18 17 18.500Z" fill="#d8616f"/><path d="M17 18.500Q24 18 29.800 14.500A13 13 0 0 1 17 30Z" fill="#d8616f"/></svg><div class="btn" style="left:1496.6px;top:429.5px;width:62.9px;height:39.5px;background:#282828;border-radius:7px;border:1px solid #3b3b3b;"></div><svg class="abs" style="left:1505.8px;top:434.8px" width="28.4" height="28.4" viewBox="0 0 32 32"><rect x="2.2" y="2.2" width="27.6" height="11.6" rx="5.8" fill="none" stroke="#e6e6e6" stroke-width="2.2"/><path d="M7 1.2h7v13.6h-7a6.8 6.8 0 0 1 0-13.6z" fill="#e6e6e6"/>
<rect x="2.2" y="18.2" width="27.6" height="11.6" rx="5.8" fill="none" stroke="#e6e6e6" stroke-width="2.2"/><path d="M7 17.2h13v13.6h-13a6.8 6.8 0 0 1 0-13.6z" fill="#e6e6e6"/></svg><svg class="abs" style="left:1538.3px;top:445.2px" width="16.5" height="11.5" viewBox="0 0 16.5 11.5"><path d="M2 2L8.25 9.5L14.5 2" fill="none" stroke="#e6e6e6" stroke-width="2.2" stroke-linecap="round" stroke-linejoin="round"/></svg><div class="btn" style="left:1673.5px;top:429.5px;width:231.7px;height:39.5px;background:#1d1d1d;border-radius:7px;border:1px solid #3b3b3b;"></div><svg class="abs" style="left:1680.0px;top:433.0px" width="34" height="34" viewBox="0 0 34 34"><circle cx="20.9" cy="12.3" r="9.3" fill="none" stroke="#e6e6e6" stroke-width="2.2"/><path d="M14 19.6L4 29.6" stroke="#e6e6e6" stroke-width="2.4" stroke-linecap="round"/></svg><div class="btn" style="left:2043.5px;top:429.5px;width:38.9px;height:39.5px;background:#282828;border-radius:7px;border:1px solid #3b3b3b;"></div><svg class="abs" style="left:2054.9px;top:445.2px" width="16.5" height="11.5" viewBox="0 0 16.5 11.5"><path d="M2 2L8.25 9.5L14.5 2" fill="none" stroke="#e6e6e6" stroke-width="2.2" stroke-linecap="round" stroke-linejoin="round"/></svg><svg class="abs" style="left:1558.0px;top:496.0px" width="30" height="30" viewBox="0 0 30 30"><path d="M1.5 8V1.5H8M22 1.5h6.5V8M28.5 22v6.5H22M8 28.5H1.5V22" fill="none" stroke="#a5a5a5" stroke-width="2"/><rect x="7.3" y="7.3" width="15.4" height="15.4" fill="#e6e6e6"/></svg><div class="t" style="left:1604.3px;top:498.0px;letter-spacing:-0.226px;color:#e6e6e6;">F_Hair_Sho...</div><svg class="abs" style="left:1760.0px;top:500.0px" width="16" height="24" viewBox="0 0 16 24"><path d="M3.5 3.5L12 12L3.5 20.5" fill="none" stroke="#e6e6e6" stroke-width="2.2" stroke-linecap="round" stroke-linejoin="round"/></svg><svg class="abs" style="left:1792.1px;top:496.1px" width="29.6" height="29.6" viewBox="0 0 29.6 29.6"><circle cx="14.8" cy="14.8" r="12.700000000000001" fill="none" stroke="#e6e6e6" stroke-width="2.2"/><path d="M14.8 14.8V2A12.8 12.8 0 0 0 2.2 11.8Q7.590000000000001 16.0 14.8 16.3Z" fill="#e6e6e6"/><path d="M14.8 16.3Q20.700000000000003 16.0 27.400000000000002 11.8A12.8 12.8 0 0 1 14.8 27.6Z" fill="#e6e6e6"/></svg><div class="t" style="left:1838.3px;top:498.0px;letter-spacing:0.040px;color:#e6e6e6;">F_Hair_Shoulde...</div><svg class="abs" style="left:2047.5px;top:496.0px" width="31.5" height="31.5" viewBox="0 0 36 36"><g fill="none" stroke="#a0a0a0" stroke-width="2.4" stroke-linejoin="round" stroke-linecap="round"><path d="M3 33L12 24"/><path d="M9 15l12.5 12.5l2.5-6.5l6-6l2 .6l1.2-1.3L22.8 3.8l-1.3 1.2l.6 2l-6 6z"/></g></svg><div class="btn" style="left:1553.7px;top:563.8px;width:473.6px;height:238.7px;background:#262626;border-radius:7px;border:1px solid #3b3b3b;"></div><div class="btn" style="left:1565.2px;top:575.0px;width:451.1px;height:36.0px;background:#47484d;border-radius:6px;"></div><svg class="abs" style="left:1569.0px;top:578.0px" width="32" height="30" viewBox="0 0 32 30"><defs><radialGradient id="sg1" cx=".38" cy=".42" r=".62"><stop offset="0" stop-color="#e2e2e2"/><stop offset=".55" stop-color="#cfcfcf"/><stop offset=".85" stop-color="#9a9a9a"/><stop offset="1" stop-color="#5e5e5e"/></radialGradient></defs><ellipse cx="15.4" cy="15" rx="12.4" ry="13.4" fill="url(#sg1)"/></svg><svg class="abs" style="left:1569.0px;top:618.0px" width="32" height="30" viewBox="0 0 32 30"><defs><radialGradient id="sg2" cx=".36" cy=".38" r=".66"><stop offset="0" stop-color="#f07a88"/><stop offset=".12" stop-color="#de3550"/><stop offset=".6" stop-color="#cf2240"/><stop offset=".85" stop-color="#a3172f"/><stop offset="1" stop-color="#5a0f1c"/></radialGradient></defs><ellipse cx="16.5" cy="15" rx="13" ry="13.2" fill="url(#sg2)"/></svg><div class="t" style="left:1614.3px;top:580.0px;letter-spacing:0.448px;color:#ffffff;">F_Hair_ShoulderBobHair_MAT</div><div class="t" style="left:1614.3px;top:620.0px;letter-spacing:0.511px;color:#d8d8d8;">F_ShoulderBobHair_Accessory_MAT</div><svg class="abs" style="left:1576.0px;top:775.0px" width="14" height="14" viewBox="0 0 14 14"><path d="M1 1.3L12.7 7L1 12.3Z" fill="#b0b0b0"/></svg><svg class="abs" style="left:1798.8px;top:779.0px" width="29.2" height="16" viewBox="0 0 29.2 16"><rect x="0.0" y="0" width="2.2" height="2.2" fill="#d0d0d0"/><rect x="6.3" y="0" width="2.2" height="2.2" fill="#d0d0d0"/><rect x="12.6" y="0" width="2.2" height="2.2" fill="#d0d0d0"/><rect x="18.9" y="0" width="2.2" height="2.2" fill="#d0d0d0"/><rect x="0.0" y="6" width="2.2" height="2.2" fill="#d0d0d0"/><rect x="6.3" y="6" width="2.2" height="2.2" fill="#d0d0d0"/><rect x="12.6" y="6" width="2.2" height="2.2" fill="#d0d0d0"/><rect x="18.9" y="6" width="2.2" height="2.2" fill="#d0d0d0"/></svg><div class="btn" style="left:2045.0px;top:564.6px;width:37.4px;height:36.6px;background:#545454;border-radius:7px 7px 0 0;"></div><div class="btn" style="left:2045.0px;top:603.0px;width:37.4px;height:39.2px;background:#545454;border-radius:0 0 7px 7px;box-shadow:0 1px 1px rgba(0,0,0,.35);"></div><svg class="abs" style="left:2054.0px;top:573.0px" width="20" height="20" viewBox="0 0 20 20"><path d="M10 1.5V18.5M1.5 10H18.5" stroke="#e6e6e6" stroke-width="2.2" stroke-linecap="round"/></svg><svg class="abs" style="left:2054.0px;top:611.0px" width="20" height="20" viewBox="0 0 20 20"><path d="M1.5 10H18.5" stroke="#e6e6e6" stroke-width="2.2" stroke-linecap="round"/></svg><div class="btn" style="left:2043.5px;top:656.0px;width:38.9px;height:38.4px;background:#282828;border-radius:7px;border:1px solid #3b3b3b;"></div><svg class="abs" style="left:2053.2px;top:669.5px" width="20" height="13" viewBox="0 0 20 13"><path d="M2 2L10.0 11L18 2" fill="none" stroke="#e6e6e6" stroke-width="2.2" stroke-linecap="round" stroke-linejoin="round"/></svg><div class="btn" style="left:2045.0px;top:708.4px;width:37.4px;height:36.5px;background:#545454;border-radius:7px 7px 0 0;"></div><div class="btn" style="left:2045.0px;top:746.9px;width:37.4px;height:38.4px;background:#545454;border-radius:0 0 7px 7px;box-shadow:0 1px 1px rgba(0,0,0,.35);"></div><svg class="abs" style="left:2055.0px;top:719.0px" width="18" height="16" viewBox="0 0 18 16"><path d="M9 2L17 14.5H1Z" fill="#e6e6e6"/></svg><svg class="abs" style="left:2055.0px;top:759.0px" width="18" height="16" viewBox="0 0 18 16"><path d="M9 14L17 1.5H1Z" fill="#e6e6e6"/></svg><div class="btn" style="left:1553.5px;top:814.3px;width:62.0px;height:38.0px;background:#282828;border-radius:7px 0 0 7px;border:1px solid #3d3d3d;"></div><svg class="abs" style="left:1562.0px;top:818.5px" width="30" height="30" viewBox="0 0 30 30"><circle cx="15" cy="15" r="12.9" fill="none" stroke="#e6e6e6" stroke-width="2.2"/><path d="M15 15V2A13 13 0 0 0 2.2 12Q7.700000000000001 16.2 15 16.5Z" fill="#e6e6e6"/><path d="M15 16.5Q21.0 16.2 27.8 12A13 13 0 0 1 15 28Z" fill="#e6e6e6"/></svg><svg class="abs" style="left:1595.2px;top:829.8px" width="16.5" height="11.5" viewBox="0 0 16.5 11.5"><path d="M2 2L8.25 9.5L14.5 2" fill="none" stroke="#e6e6e6" stroke-width="2.2" stroke-linecap="round" stroke-linejoin="round"/></svg><div class="btn" style="left:1617.0px;top:814.3px;width:265.3px;height:38.0px;background:#1d1d1d;border-radius:0;border:1px solid #3b3b3b;border-left:none;border-right:none;"></div><div class="t" style="left:1630.3px;top:820.0px;letter-spacing:0.196px;color:#e6e6e6;">F_Hair_ShoulderBobH...</div><div class="btn" style="left:1884.0px;top:815.0px;width:38.2px;height:36.3px;background:#545454;border-radius:0;"></div><div class="btn" style="left:1924.0px;top:815.0px;width:38.0px;height:36.3px;background:#545454;border-radius:0;"></div><div class="btn" style="left:1963.9px;top:815.0px;width:38.1px;height:36.3px;background:#545454;border-radius:0 7px 7px 0;"></div><svg class="abs" style="left:1888.0px;top:817.0px" width="32" height="32" viewBox="0 0 32 32"><path d="M16 3.2C12 6 8 7 4.5 7C4 16 7 24 16 29C25 24 28 16 27.5 7C24 7 20 6 16 3.2Z" fill="none" stroke="#a8a8a8" stroke-width="2" stroke-linejoin="round"/></svg><svg class="abs" style="left:1927.0px;top:817.0px" width="32" height="32" viewBox="0 0 32 32"><path d="M3 11.5V28.5H23.5V25" fill="none" stroke="#c8c8c8" stroke-width="2"/><path d="M11 3H21.5L29 10.5V21.5H11Z" fill="none" stroke="#e6e6e6" stroke-width="2.2" stroke-linejoin="miter"/><path d="M21 3.5L28.5 11H21Z" fill="#e6e6e6"/></svg><svg class="abs" style="left:1972.0px;top:822.0px" width="22" height="22" viewBox="0 0 22 22"><path d="M4 4L18 18M18 4L4 18" stroke="#e6e6e6" stroke-width="2.2" stroke-linecap="round"/></svg><div class="btn" style="left:2020.7px;top:814.3px;width:62.5px;height:38.0px;background:#282828;border-radius:7px;border:1px solid #3b3b3b;"></div><svg class="abs" style="left:2028.0px;top:817.0px" width="32" height="32" viewBox="0 0 32 32"><g fill="none" stroke="#e6e6e6" stroke-width="2.2"><path d="M6.5 6.2H25M6.5 6.2L15.8 27M25 6.2L15.8 27"/></g><g fill="#282828" stroke="#e6e6e6" stroke-width="2.2"><rect x="2.5" y="2.5" width="7" height="7"/><rect x="22" y="2.5" width="7" height="7"/><rect x="12.3" y="23" width="7" height="7"/></g></svg><svg class="abs" style="left:2062.2px;top:830.8px" width="16.5" height="11.5" viewBox="0 0 16.5 11.5"><path d="M2 2L8.25 9.5L14.5 2" fill="none" stroke="#e6e6e6" stroke-width="2.2" stroke-linecap="round" stroke-linejoin="round"/></svg><div class="btn" style="left:1553.0px;top:873.0px;width:530.9px;height:49.7px;background:#3d3d3d;border-radius:8px;"></div><div class="btn" style="left:1553.0px;top:927.1px;width:530.9px;height:392.9px;background:#3d3d3d;border-radius:8px;"></div><svg class="abs" style="left:1572.0px;top:886.0px" width="16" height="24" viewBox="0 0 16 24"><path d="M3.5 3.5L12 12L3.5 20.5" fill="none" stroke="#c4c4c4" stroke-width="2" stroke-linecap="round" stroke-linejoin="round"/></svg><div class="t" style="left:1595.8px;top:886.0px;letter-spacing:1.207px;color:#e6e6e6;">Preview</div><svg class="abs" style="left:1566.0px;top:944.0px" width="24" height="16" viewBox="0 0 24 16"><path d="M3.5 3.5L12 12.5L20.5 3.5" fill="none" stroke="#c4c4c4" stroke-width="2" stroke-linecap="round" stroke-linejoin="round"/></svg><div class="t" style="left:1595.8px;top:940.0px;letter-spacing:0.896px;color:#e6e6e6;">Surface</div><svg class="abs" style="left:2050.2px;top:892.8px" width="28.4" height="16.6" viewBox="0 0 28.4 16.6"><rect x="0.0" y="1.2" width="2.3" height="2.3" fill="#555"/><rect x="0.0" y="0.0" width="2.3" height="2.3" fill="#1d1d1d"/><rect x="6.1" y="1.2" width="2.3" height="2.3" fill="#555"/><rect x="6.1" y="0.0" width="2.3" height="2.3" fill="#1d1d1d"/><rect x="12.2" y="1.2" width="2.3" height="2.3" fill="#555"/><rect x="12.2" y="0.0" width="2.3" height="2.3" fill="#1d1d1d"/><rect x="18.299999999999997" y="1.2" width="2.3" height="2.3" fill="#555"/><rect x="18.299999999999997" y="0.0" width="2.3" height="2.3" fill="#1d1d1d"/><rect x="0.0" y="5.4" width="2.3" height="2.3" fill="#555"/><rect x="0.0" y="4.2" width="2.3" height="2.3" fill="#1d1d1d"/><rect x="6.1" y="5.4" width="2.3" height="2.3" fill="#555"/><rect x="6.1" y="4.2" width="2.3" height="2.3" fill="#1d1d1d"/><rect x="12.2" y="5.4" width="2.3" height="2.3" fill="#555"/><rect x="12.2" y="4.2" width="2.3" height="2.3" fill="#1d1d1d"/><rect x="18.299999999999997" y="5.4" width="2.3" height="2.3" fill="#555"/><rect x="18.299999999999997" y="4.2" width="2.3" height="2.3" fill="#1d1d1d"/><rect x="0.0" y="9.6" width="2.3" height="2.3" fill="#555"/><rect x="0.0" y="8.4" width="2.3" height="2.3" fill="#1d1d1d"/><rect x="6.1" y="9.6" width="2.3" height="2.3" fill="#555"/><rect x="6.1" y="8.4" width="2.3" height="2.3" fill="#1d1d1d"/><rect x="12.2" y="9.6" width="2.3" height="2.3" fill="#555"/><rect x="12.2" y="8.4" width="2.3" height="2.3" fill="#1d1d1d"/><rect x="18.299999999999997" y="9.6" width="2.3" height="2.3" fill="#555"/><rect x="18.299999999999997" y="8.4" width="2.3" height="2.3" fill="#1d1d1d"/></svg><svg class="abs" style="left:2050.2px;top:946.9px" width="28.4" height="16.6" viewBox="0 0 28.4 16.6"><rect x="0.0" y="1.2" width="2.3" height="2.3" fill="#555"/><rect x="0.0" y="0.0" width="2.3" height="2.3" fill="#1d1d1d"/><rect x="6.1" y="1.2" width="2.3" height="2.3" fill="#555"/><rect x="6.1" y="0.0" width="2.3" height="2.3" fill="#1d1d1d"/><rect x="12.2" y="1.2" width="2.3" height="2.3" fill="#555"/><rect x="12.2" y="0.0" width="2.3" height="2.3" fill="#1d1d1d"/><rect x="18.299999999999997" y="1.2" width="2.3" height="2.3" fill="#555"/><rect x="18.299999999999997" y="0.0" width="2.3" height="2.3" fill="#1d1d1d"/><rect x="0.0" y="5.4" width="2.3" height="2.3" fill="#555"/><rect x="0.0" y="4.2" width="2.3" height="2.3" fill="#1d1d1d"/><rect x="6.1" y="5.4" width="2.3" height="2.3" fill="#555"/><rect x="6.1" y="4.2" width="2.3" height="2.3" fill="#1d1d1d"/><rect x="12.2" y="5.4" width="2.3" height="2.3" fill="#555"/><rect x="12.2" y="4.2" width="2.3" height="2.3" fill="#1d1d1d"/><rect x="18.299999999999997" y="5.4" width="2.3" height="2.3" fill="#555"/><rect x="18.299999999999997" y="4.2" width="2.3" height="2.3" fill="#1d1d1d"/><rect x="0.0" y="9.6" width="2.3" height="2.3" fill="#555"/><rect x="0.0" y="8.4" width="2.3" height="2.3" fill="#1d1d1d"/><rect x="6.1" y="9.6" width="2.3" height="2.3" fill="#555"/><rect x="6.1" y="8.4" width="2.3" height="2.3" fill="#1d1d1d"/><rect x="12.2" y="9.6" width="2.3" height="2.3" fill="#555"/><rect x="12.2" y="8.4" width="2.3" height="2.3" fill="#1d1d1d"/><rect x="18.299999999999997" y="9.6" width="2.3" height="2.3" fill="#555"/><rect x="18.299999999999997" y="8.4" width="2.3" height="2.3" fill="#1d1d1d"/></svg><div class="btn" style="left:1570.9px;top:994.9px;width:495.1px;height:35.9px;background:#4772b3;border-radius:6px;box-shadow:0 1.5px 1.5px rgba(0,0,0,.4);"></div><svg class="abs" style="left:1577.0px;top:997.0px" width="34" height="32" viewBox="0 0 34 32"><g fill="#fff"><rect x="5.5" y="2" width="16.5" height="12" rx="3"/><rect x="1.5" y="18" width="16.5" height="12" rx="3"/></g><g fill="none" stroke="#4772b3" stroke-width="1.8"><path d="M8 10.2H19.5M4 26.2H15.5"/></g><path d="M22.5 5.5Q28.5 6 28.5 12V19Q28.500 24 22 24.5" fill="none" stroke="#dfe7f5" stroke-width="1.8"/><path d="M19 21.5L23 24.5L19 27.5Z" fill="#fff"/></svg><div class="t" style="left:1777.6px;top:1001.0px;letter-spacing:0.795px;color:#ffffff;">Use Nodes</div><div class="t" style="left:1662.0px;top:1072.0px;letter-spacing:0.896px;color:#e6e6e6;">Surface</div><div class="btn" style="left:1763.7px;top:1066.8px;width:262.5px;height:36.0px;background:#282828;border-radius:6px;box-shadow:0 1.5px 1.5px rgba(0,0,0,.38);"></div><div class="abs" style="left:1774.7px;top:1078.1px;width:14.4px;height:14.4px;border-radius:50%;background:#5ccb5f"></div><div class="t" style="left:1804.3px;top:1072.0px;letter-spacing:0.467px;color:#e6e6e6;">Principled BSDF</div><div class="btn" style="left:1763.7px;top:1139.0px;width:262.5px;height:35.8px;background:#282828;border-radius:6px;box-shadow:0 1.5px 1.5px rgba(0,0,0,.38);"></div><div class="t" style="left:1776.9px;top:1144.0px;letter-spacing:0.498px;color:#e6e6e6;">GGX</div><svg class="abs" style="left:2006.5px;top:1153.1px" width="16" height="11.2" viewBox="0 0 16 11.2"><path d="M2 2L8.0 9.2L14 2" fill="none" stroke="#e6e6e6" stroke-width="2.2" stroke-linecap="round" stroke-linejoin="round"/></svg><div class="btn" style="left:1763.7px;top:1188.9px;width:262.5px;height:35.8px;background:#282828;border-radius:6px;box-shadow:0 1.5px 1.5px rgba(0,0,0,.38);"></div><div class="t" style="left:1776.9px;top:1194.0px;letter-spacing:1.005px;color:#e6e6e6;">Random Walk</div><svg class="abs" style="left:2006.5px;top:1203.0px" width="16" height="11.2" viewBox="0 0 16 11.2"><path d="M2 2L8.0 9.2L14 2" fill="none" stroke="#e6e6e6" stroke-width="2.2" stroke-linecap="round" stroke-linejoin="round"/></svg><div class="abs" style="left:2043.5px;top:1152.7px;width:8.8px;height:8.8px;border-radius:50%;background:#d2d2d2"></div><div class="abs" style="left:2043.5px;top:1202.6px;width:8.8px;height:8.8px;border-radius:50%;background:#d2d2d2"></div><svg class="abs" style="left:1582.0px;top:1249.0px" width="14" height="14" viewBox="0 0 14 14"><path d="M1 1.3L12.7 7L1 12.3Z" fill="#e6e6e6"/></svg><div class="t" style="left:1626.9px;top:1244.0px;letter-spacing:0.836px;color:#e6e6e6;">Base Color</div><div class="btn" style="left:1763.7px;top:1238.8px;width:262.5px;height:36.1px;background:#282828;border-radius:6px;box-shadow:0 1.5px 1.5px rgba(0,0,0,.38);"></div><div class="abs" style="left:1774.7px;top:1249.8px;width:14.4px;height:14.4px;border-radius:50%;background:#c7c729"></div><div class="t" style="left:1804.3px;top:1244.0px;letter-spacing:-0.375px;color:#e6e6e6;">BASE COLOR</div><div class="t" style="left:1623.1px;top:1296.0px;letter-spacing:0.970px;color:#e6e6e6;">Subsurface</div><div class="btn" style="left:1763.7px;top:1289.0px;width:262.5px;height:36.0px;background:#545454;border-radius:6px;"></div><div class="btn" style="left:1763.7px;top:1289.0px;width:36.3px;height:36.0px;background:#282828;border-radius:6px 0 0 6px;"></div><div class="abs" style="left:1774.7px;top:1300px;width:14.4px;height:14.4px;border-radius:50%;background:#a1a1a1"></div><div class="t" style="left:1880.5px;top:1295.0px;letter-spacing:1.988px;color:#e6e6e6;">0.000</div></div></div><div class="abs" style="left:1522px;top:538px;width:529px;height:138px;box-sizing:border-box;border:15px solid #76f44b"></div></body></html>
